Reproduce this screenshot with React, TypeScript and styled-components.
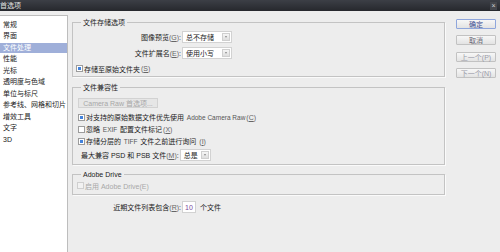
import React from "react";
import styled, { createGlobalStyle } from "styled-components";

const GlobalStyle = createGlobalStyle`
  html, body {
    margin: 0;
    padding: 0;
  }
  body {
    width: 500px;
    height: 252px;
    overflow: hidden;
    background: #ededed;
    font-family: "Liberation Sans", "Noto Sans CJK SC", sans-serif;
    font-size: 7px;
    color: #222;
  }
`;

const Window = styled.div`
  width: 500px;
  height: 252px;
  display: flex;
  flex-direction: column;
  background: #ededed;
`;

const TitleBar = styled.div`
  height: 11px;
  flex: none;
  display: flex;
  align-items: center;
  justify-content: space-between;
  padding-right: 3px;
  background: linear-gradient(#3c3f46, #26282d);
  color: #e2e2e2;
`;

const Title = styled.span`
  margin-left: 0;
  line-height: 11px;
`;

const CloseBox = styled.span`
  width: 7px;
  height: 8px;
  display: flex;
  align-items: center;
  justify-content: center;
  font-size: 7px;
  color: #cfcfcf;
  background: #44464c;
`;

const Body = styled.div`
  flex: 1;
  min-height: 0;
  display: flex;
  padding-top: 4px;
`;

const Sidebar = styled.ul`
  list-style: none;
  margin: 0 0 0 -1px;
  padding: 3.5px 0 0;
  width: 69px;
  flex: none;
  box-sizing: border-box;
  background: #fff;
  border: 1px solid #bdbdbd;
  border-bottom: none;
`;

const NavItem = styled.li<{ $active?: boolean }>`
  height: 10px;
  line-height: 10px;
  margin-bottom: 1.5px;
  padding-left: 3px;
  white-space: nowrap;
  background: ${(p) => (p.$active ? "#9fafd9" : "transparent")};
  color: ${(p) => (p.$active ? "#fff" : "#222")};
`;

const Main = styled.div`
  width: 373px;
  flex: none;
  padding: 3px 0 0 4px;
  display: flex;
  flex-direction: column;
`;

const Group = styled.fieldset<{ $pt: number; $pb: number; $gap?: number; $mt?: number }>`
  margin: ${(p) => p.$mt ?? 0}px 0 0;
  padding: ${(p) => p.$pt}px 0 ${(p) => p.$pb}px;
  min-width: 0;
  width: 373px;
  box-sizing: border-box;
  border: 1px solid #c3c3c3;
  box-shadow: 1px 1px 0 #fafafa;
  display: flex;
  flex-direction: column;
  gap: ${(p) => p.$gap ?? 0}px;
`;

const Legend = styled.legend`
  margin-left: 8px;
  padding: 0 2px;
  line-height: 9px;
`;

const FieldRow = styled.div<{ $indent?: number }>`
  height: 12px;
  display: flex;
  align-items: center;
  padding-left: ${(p) => p.$indent ?? 0}px;
  white-space: nowrap;
`;

const Label = styled.span<{ $w?: number }>`
  width: ${(p) => (p.$w ? `${p.$w}px` : "auto")};
  text-align: right;
  padding-right: 1px;
  box-sizing: border-box;
  white-space: nowrap;
`;

const Key = styled.span`
  color: #666;
  u {
    text-underline-offset: 1px;
  }
`;

const Select = styled.div<{ $w: number }>`
  width: ${(p) => p.$w}px;
  height: 12px;
  box-sizing: border-box;
  border: 1px solid #d2d2d2;
  background: #fff;
  display: flex;
  align-items: center;
  padding: 0 1px 0 3px;
  color: #222;
`;

const Arrow = styled.span`
  margin-left: auto;
  width: 8px;
  height: 8px;
  box-sizing: border-box;
  border: 1px solid #cfcfcf;
  background: linear-gradient(#f6f6f6, #dedede);
  display: flex;
  align-items: center;
  justify-content: center;
  &::after {
    content: "";
    border-left: 1.5px solid transparent;
    border-right: 1.5px solid transparent;
    border-top: 2px solid #888;
  }
`;

const CheckRow = styled.label<{ $indent: number; $h?: number; $disabled?: boolean }>`
  height: ${(p) => p.$h ?? 12}px;
  display: flex;
  align-items: center;
  gap: 1px;
  padding-left: ${(p) => p.$indent}px;
  white-space: nowrap;
  color: ${(p) => (p.$disabled ? "#a8a8a8" : "#222")};
`;

const Box = styled.span<{ $checked?: boolean; $disabled?: boolean }>`
  width: 7px;
  height: 7px;
  flex: none;
  box-sizing: border-box;
  border: 1px solid ${(p) => (p.$disabled ? "#cfcfcf" : "#9c9c9c")};
  background: ${(p) => (p.$checked ? "#4282dc" : p.$disabled ? "#f2f2f2" : "#fff")};
  box-shadow: inset 0 0 0 1px ${(p) => (p.$disabled ? "#f2f2f2" : "#fff")};
`;

const Latin = styled.span`
  color: #555;
  font-size: 6.5px;
`;

const PlainButton = styled.div`
  margin-left: 5px;
  width: 80px;
  height: 10px;
  box-sizing: border-box;
  border: 1px solid #d2d2d2;
  background: #e6e6e6;
  color: #a6a6a6;
  display: flex;
  align-items: center;
  justify-content: center;
  white-space: nowrap;
`;

const RecentRow = styled.div`
  margin-top: 6px;
  height: 12px;
  display: flex;
  align-items: center;
  white-space: nowrap;
`;

const NumberInput = styled.div`
  width: 14px;
  height: 12px;
  box-sizing: border-box;
  border: 1px solid #d2d2d2;
  background: #fff;
  color: #7b4c9c;
  display: flex;
  align-items: center;
  justify-content: center;
`;

const Suffix = styled.span`
  margin-left: 4px;
`;

const Actions = styled.div`
  margin-left: 11px;
  padding-top: 4px;
  width: 40px;
  display: flex;
  flex-direction: column;
  gap: 6.3px;
`;

const DialogButton = styled.div<{ $primary?: boolean; $dim?: boolean }>`
  height: 10px;
  box-sizing: border-box;
  border: 1px solid ${(p) => (p.$primary ? "#8fa6dc" : "#c2c2c2")};
  border-radius: 1px;
  background: linear-gradient(#f7f7f7, #e3e3e3);
  color: ${(p) => (p.$primary ? "#3b4c92" : p.$dim ? "#9a9aa8" : "#6a6a78")};
  display: flex;
  align-items: center;
  justify-content: center;
  white-space: nowrap;
`;

const navItems = [
  "常规",
  "界面",
  "文件处理",
  "性能",
  "光标",
  "透明度与色域",
  "单位与标尺",
  "参考线、网格和切片",
  "增效工具",
  "文字",
  "3D",
];

export default function App() {
  return (
    <>
      <GlobalStyle />
      <Window>
        <TitleBar>
          <Title>首选项</Title>
          <CloseBox>×</CloseBox>
        </TitleBar>
        <Body>
          <Sidebar>
            {navItems.map((item) => (
              <NavItem key={item} $active={item === "文件处理"}>
                {item}
              </NavItem>
            ))}
          </Sidebar>

          <Main>
            <Group $pt={4} $pb={2} $gap={4}>
              <Legend>文件存储选项</Legend>
              <FieldRow>
                <Label $w={109}>
                  图像预览<Key>(<u>G</u>)</Key>:
                </Label>
                <Select $w={50}>
                  总不存储
                  <Arrow />
                </Select>
              </FieldRow>
              <FieldRow>
                <Label $w={109}>
                  文件扩展名<Key>(<u>E</u>)</Key>:
                </Label>
                <Select $w={50}>
                  使用小写
                  <Arrow />
                </Select>
              </FieldRow>
              <CheckRow $indent={3} $h={11}>
                <Box $checked />
                存储至原始文件夹<Key>(<u>S</u>)</Key>
              </CheckRow>
            </Group>

            <Group $pt={6} $pb={3} $mt={6}>
              <Legend>文件兼容性</Legend>
              <PlainButton>Camera Raw 首选项...</PlainButton>
              <CheckRow $indent={5} style={{ marginTop: 3 }}>
                <Box $checked />
                对支持的原始数据文件优先使用 <Latin>&nbsp;Adobe Camera Raw</Latin>
                <Key>(<u>C</u>)</Key>
              </CheckRow>
              <CheckRow $indent={5}>
                <Box />
                忽略 <Latin>&nbsp;EXIF&nbsp;</Latin> 配置文件标记<Key>(<u>X</u>)</Key>
              </CheckRow>
              <CheckRow $indent={5}>
                <Box $checked />
                存储分层的 <Latin>&nbsp;TIFF&nbsp;</Latin> 文件之前进行询问 <Key>&nbsp;(<u>I</u>)</Key>
              </CheckRow>
              <FieldRow $indent={8} style={{ marginTop: 2 }}>
                <Label>
                  最大兼容 PSD 和 PSB 文件<Key>(<u>M</u>)</Key>:
                </Label>
                <Select $w={31}>
                  总是
                  <Arrow />
                </Select>
              </FieldRow>
            </Group>

            <Group $pt={1} $pb={3} $mt={5}>
              <Legend>Adobe Drive</Legend>
              <CheckRow $indent={4} $h={11} $disabled>
                <Box $disabled />
                启用 Adobe Drive(E)
              </CheckRow>
            </Group>

            <RecentRow>
              <Label $w={110}>
                近期文件列表包含<Key>(<u>R</u>)</Key>:
              </Label>
              <NumberInput>10</NumberInput>
              <Suffix>个文件</Suffix>
            </RecentRow>
          </Main>

          <Actions>
            <DialogButton $primary>确定</DialogButton>
            <DialogButton>取消</DialogButton>
            <DialogButton $dim>上一个(P)</DialogButton>
            <DialogButton $dim>下一个(N)</DialogButton>
          </Actions>
        </Body>
      </Window>
    </>
  );
}
